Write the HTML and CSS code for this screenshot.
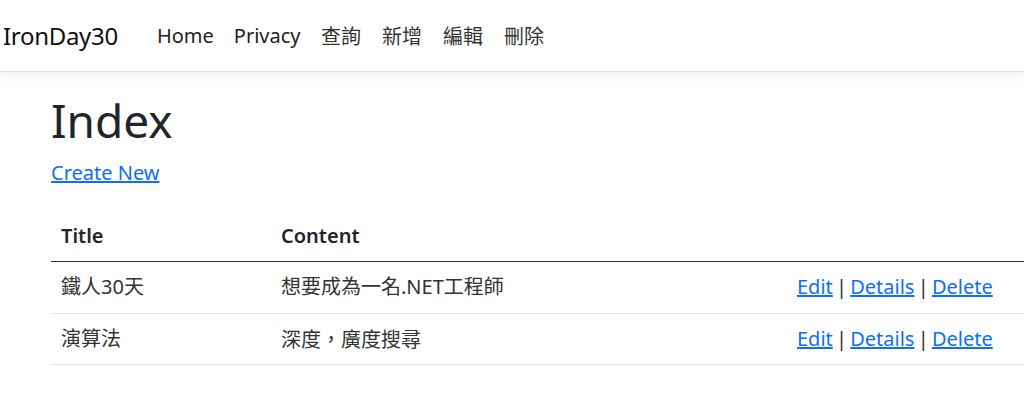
FILE: index.html
```html
<!DOCTYPE html>
<html lang="zh-Hant-TW">
<head>
<meta charset="utf-8">
<title>Index - IronDay30</title>
<link rel="stylesheet" href="styles.css">
</head>
<body>
<header class="navbar">
  <a class="brand" href="#">IronDay30</a>
  <nav class="nav">
    <a class="nav-link" href="#">Home</a>
    <a class="nav-link" href="#">Privacy</a>
    <a class="nav-link cjk" href="#">查詢</a>
    <a class="nav-link cjk" href="#">新增</a>
    <a class="nav-link cjk" href="#">編輯</a>
    <a class="nav-link cjk" href="#">刪除</a>
  </nav>
</header>
<main class="main">
  <h1 class="title">Index</h1>
  <p class="create"><a href="#">Create New</a></p>
  <table class="table">
    <thead>
      <tr>
        <th class="col-title">Title</th>
        <th class="col-content">Content</th>
        <th class="col-actions"></th>
      </tr>
    </thead>
    <tbody>
      <tr>
        <td>鐵人30天</td>
        <td>想要成為一名.NET工程師</td>
        <td class="actions"><a href="#">Edit</a> | <a href="#">Details</a> | <a href="#">Delete</a></td>
      </tr>
      <tr>
        <td>演算法</td>
        <td class="tc">深度，廣度搜尋</td>
        <td class="actions"><a href="#">Edit</a> | <a href="#">Details</a> | <a href="#">Delete</a></td>
      </tr>
    </tbody>
  </table>
</main>
</body>
</html>
```
FILE: styles.css
```css
html, body {
  margin: 0;
  padding: 0;
  background: #fff;
  overflow: hidden;
}
body {
  font-family: "Noto Sans", "Noto Sans CJK TC", sans-serif;
  font-size: 20px;
  line-height: 1.5;
  color: #212529;
}
a { color: #0d6efd; }

.navbar {
  height: 71px;
  border-bottom: 1px solid #e2e2e2;
  box-shadow: 0 4px 12px rgba(0, 0, 0, 0.05);
  display: flex;
  align-items: center;
  padding-left: 3px;
  background: #fff;
}
.brand {
  font-size: 24px;
  color: #111;
  text-decoration: none;
  margin-right: 29px;
  letter-spacing: -0.3px;
}
.nav {
  display: flex;
}
.nav-link {
  padding: 0 10px;
  font-size: 20px;
  color: #222;
  text-decoration: none;
}
.nav-link.cjk {
  font-family: "Noto Sans CJK TC", sans-serif;
  color: #333;
  padding: 0 10.5px;
}

.main {
  padding-left: 51px;
  padding-top: 21px;
}
.title {
  font-size: 46px;
  font-weight: 400;
  line-height: 1.2;
  margin: 0 0 10px 0;
  color: #212529;
}
.create {
  margin: 0 0 23px 0;
  font-size: 20px;
}
.table {
  border-collapse: collapse;
  width: 1060px;
  font-size: 20px;
}
.table th, .table td {
  padding: 10px;
  text-align: left;
  vertical-align: top;
}
.table th {
  height: 29px;
  font-weight: 600;
  color: #212529;
  border-bottom: 1px solid #333;
}
.table td {
  height: 30.5px;
  border-bottom: 1px solid #e6e6e6;
  color: #333;
}
.table td.tc {
  font-family: "Noto Sans CJK TC", sans-serif;
}
.table td.actions {
  word-spacing: -2px;
}
.col-title { width: 200px; }
.col-content { width: 496px; }
```
